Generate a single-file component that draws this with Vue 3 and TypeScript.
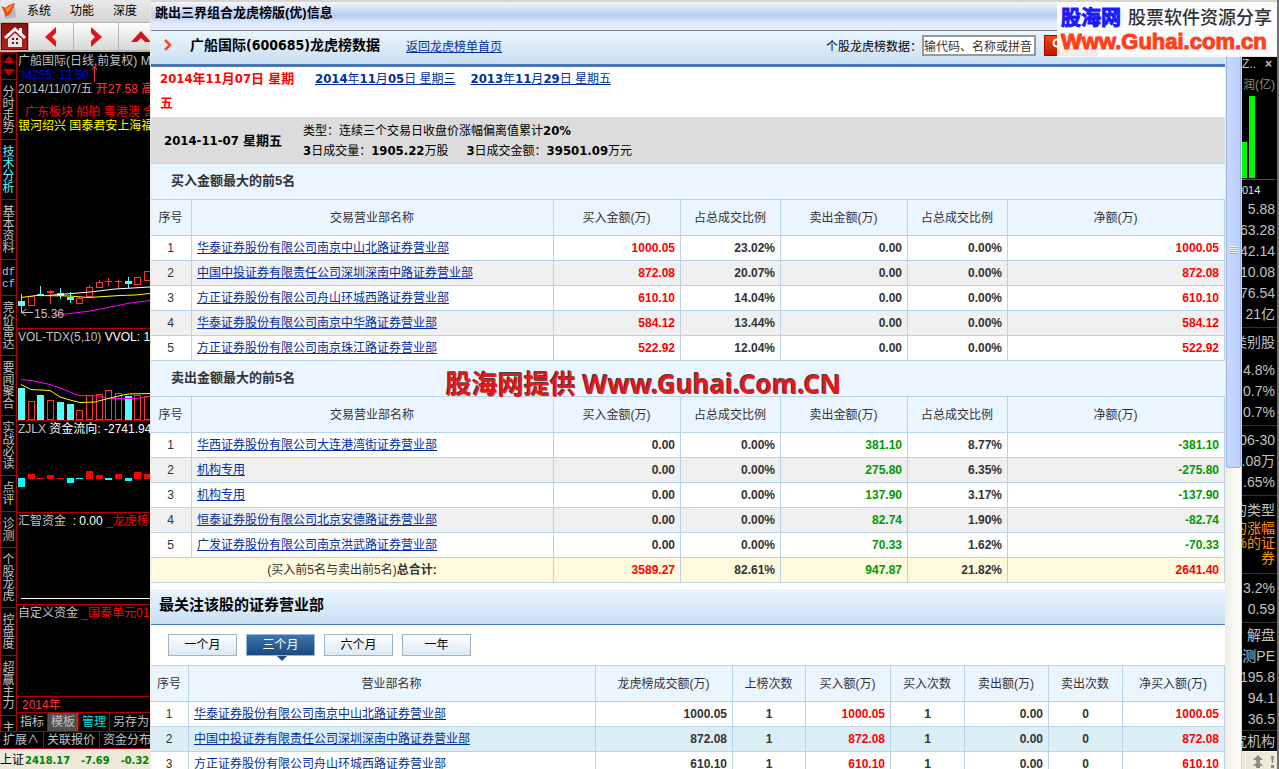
<script setup lang="ts">
import { ref } from 'vue'

interface Row { no: number; name: string; buy: string; buyPct: string; sell: string; sellPct: string; net: string }
interface Rank { no: number; name: string; total: string; times: string; buy: string; buyTimes: string; sell: string; sellTimes: string; net: string }
interface Bar { x: number; y: number; h: number; kind: 'up' | 'down' }
interface Candle { x: number; top: number; bottom: number; high: number; low: number; kind: 'up' | 'down' | 'flat' }

const buyers: Row[] = [
  { no: 1, name: '华泰证券股份有限公司南京中山北路证券营业部', buy: '1000.05', buyPct: '23.02%', sell: '0.00', sellPct: '0.00%', net: '1000.05' },
  { no: 2, name: '中国中投证券有限责任公司深圳深南中路证券营业部', buy: '872.08', buyPct: '20.07%', sell: '0.00', sellPct: '0.00%', net: '872.08' },
  { no: 3, name: '方正证券股份有限公司舟山环城西路证券营业部', buy: '610.10', buyPct: '14.04%', sell: '0.00', sellPct: '0.00%', net: '610.10' },
  { no: 4, name: '华泰证券股份有限公司南京中华路证券营业部', buy: '584.12', buyPct: '13.44%', sell: '0.00', sellPct: '0.00%', net: '584.12' },
  { no: 5, name: '方正证券股份有限公司南京珠江路证券营业部', buy: '522.92', buyPct: '12.04%', sell: '0.00', sellPct: '0.00%', net: '522.92' },
]
const sellers: Row[] = [
  { no: 1, name: '华西证券股份有限公司大连港湾街证券营业部', buy: '0.00', buyPct: '0.00%', sell: '381.10', sellPct: '8.77%', net: '-381.10' },
  { no: 2, name: '机构专用', buy: '0.00', buyPct: '0.00%', sell: '275.80', sellPct: '6.35%', net: '-275.80' },
  { no: 3, name: '机构专用', buy: '0.00', buyPct: '0.00%', sell: '137.90', sellPct: '3.17%', net: '-137.90' },
  { no: 4, name: '恒泰证券股份有限公司北京安德路证券营业部', buy: '0.00', buyPct: '0.00%', sell: '82.74', sellPct: '1.90%', net: '-82.74' },
  { no: 5, name: '广发证券股份有限公司南京洪武路证券营业部', buy: '0.00', buyPct: '0.00%', sell: '70.33', sellPct: '1.62%', net: '-70.33' },
]
const boards = [
  { title: '买入金额最大的前5名', rows: buyers, total: false },
  { title: '卖出金额最大的前5名', rows: sellers, total: true },
]
const ranks: Rank[] = [
  { no: 1, name: '华泰证券股份有限公司南京中山北路证券营业部', total: '1000.05', times: '1', buy: '1000.05', buyTimes: '1', sell: '0.00', sellTimes: '0', net: '1000.05' },
  { no: 2, name: '中国中投证券有限责任公司深圳深南中路证券营业部', total: '872.08', times: '1', buy: '872.08', buyTimes: '1', sell: '0.00', sellTimes: '0', net: '872.08' },
  { no: 3, name: '方正证券股份有限公司舟山环城西路证券营业部', total: '610.10', times: '1', buy: '610.10', buyTimes: '1', sell: '0.00', sellTimes: '0', net: '610.10' },
]
const periods = ['一个月', '三个月', '六个月', '一年']
const period = ref('三个月')
const keyword = ref('输代码、名称或拼音')

const tone = (v: string): string => (v.startsWith('-') ? 'green' : v === '0.00' ? '' : 'red')

const sideTabs = ['分时走势', '技术分析', '基本资料', 'df|cf', '竞价雷达', '要闻聚合', '实战必读', '点评', '诊测', '个股龙虎', '控盘度', '超赢主力', '主']
const tabLines = (t: string): string[] => (t.includes('|') ? t.split('|') : [...t])

const candles: Candle[] = [
  { x: 21, top: 301, bottom: 306, high: 294, low: 313, kind: 'down' },
  { x: 31, top: 296, bottom: 306, high: 296, low: 296, kind: 'up' },
  { x: 40, top: 294, bottom: 296, high: 286, low: 296, kind: 'down' },
  { x: 50, top: 291, bottom: 293, high: 290, low: 304, kind: 'flat' },
  { x: 60, top: 293, bottom: 296, high: 288, low: 299, kind: 'down' },
  { x: 70, top: 297, bottom: 300, high: 292, low: 303, kind: 'down' },
  { x: 79, top: 298, bottom: 304, high: 296, low: 298, kind: 'up' },
  { x: 89, top: 287, bottom: 297, high: 285, low: 287, kind: 'up' },
  { x: 99, top: 282, bottom: 288, high: 280, low: 289, kind: 'up' },
  { x: 108, top: 281, bottom: 282, high: 278, low: 286, kind: 'flat' },
  { x: 118, top: 281, bottom: 282, high: 280, low: 288, kind: 'flat' },
  { x: 128, top: 281, bottom: 284, high: 277, low: 288, kind: 'down' },
  { x: 137, top: 277, bottom: 285, high: 277, low: 277, kind: 'up' },
  { x: 147, top: 271, bottom: 281, high: 271, low: 282, kind: 'up' },
]
const slots = [18, 28, 37, 47, 57, 67, 76, 86, 96, 105, 115, 125, 134, 144]
const volTops = [388, 401, 395, 400, 402, 404, 410, 395, 394, 390, 393, 396, 395, 396]
const volDown = [0, 2, 4, 5, 11]
const volumes: Bar[] = slots.map((x, i) => ({ x, y: volTops[i], h: 420 - volTops[i], kind: volDown.includes(i) ? 'down' : 'up' }))
const flowRaw = [-9, 5, 1, 4, 1, -5, -1, 8, 4, -2, 5, -3, 7, 5]
const flows: Bar[] = slots.map((x, i) => ({
  x,
  y: flowRaw[i] < 0 ? 478 : 479 - flowRaw[i],
  h: Math.abs(flowRaw[i]),
  kind: flowRaw[i] < 0 ? 'down' : 'up',
}))

const prices = ['5.88', '63.28', '42.14', '10.08', '76.54', '21亿']
const shares = ['4.8%', '0.7%', '0.7%']
const report = ['06-30', '.08万', '.65%']
const forecast = ['解盘', '测PE', '195.8', '94.1', '36.5']
</script>

<template>
  <div class="shell">
    <aside class="terminal">
      <nav class="menu">
        <svg class="logo" width="18" height="18" viewBox="0 0 18 18">
          <path d="M2 5h12l1 10-11 2z" fill="#b4b8be" />
          <path d="M0 4l5 2c2-3 5-4 9-5-1 4-2 5-3 6 0 4-3 6-7 8 1-4-2-7-4-11z" fill="#f0480a" />
          <path d="M4 7c3-1 5-3 8-5-1 4-4 5-5 9-1-1-2-3-3-4z" fill="#ff9030" />
        </svg>
        <a href="#">系统</a><a href="#">功能</a><a href="#">深度</a>
      </nav>
      <div class="tools">
        <button class="home" aria-label="首页">
          <svg width="24" height="24" viewBox="0 0 24 24">
            <path d="M12 2L1 12l2 2 9-8 9 8 2-2-4-4V3h-3v3z" fill="#fff" />
            <path d="M5 14l7-6 7 6v8H5z" fill="#e9e4e4" />
            <path d="M9 13h2v2H9zM13 13h2v2h-2zM9 17h2v2H9zM13 17h2v2h-2z" fill="#6a1010" />
          </svg>
        </button>
        <button aria-label="后退"><svg width="12" height="20" viewBox="0 0 12 20"><path d="M11 0L0 10l11 10v-6L7 10l4-4z" fill="#e0161a" /></svg></button>
        <button aria-label="前进"><svg width="12" height="20" viewBox="0 0 12 20"><path d="M1 0l11 10L1 20v-6l4-4-4-4z" fill="#e0161a" /></svg></button>
        <button aria-label="上移"><svg width="20" height="12" viewBox="0 0 20 12"><path d="M0 11L10 0l10 11h-6l-4-4-4 4z" fill="#d0161a" /></svg></button>
      </div>
      <div class="work">
        <div class="tabs">
          <div class="spin">
            <svg width="12" height="22" viewBox="0 0 12 22"><path d="M6 1l6 7H0zM0 14h12l-6 7z" fill="#c00000" /></svg>
          </div>
          <button v-for="t in sideTabs" :key="t" class="tab" :class="{ on: t === '技术分析', mono: t.includes('|') }">
            <span v-for="(c, i) in tabLines(t)" :key="i">{{ c }}</span>
          </button>
        </div>
        <div class="charts">
          <section class="panel k">
            <p>广船国际(日线,前复权) M</p>
            <p class="blue">M255: 13.50</p>
            <p>2014/11/07/五 <span class="hot">开27.58 高</span></p>
            <p class="plates">广东板块 船舶 粤港澳 含</p>
            <p class="yellow">银河绍兴 国泰君安上海福</p>
            <svg class="plot" viewBox="17 52 133 276" width="133" height="276">
              <path d="M94.5 82V67M92 70l2.500-4 2.500 4" stroke="#ff3232" fill="none" />
              <g v-for="c in candles" :key="c.x" :class="c.kind">
                <line :x1="c.x + 0.5" :x2="c.x + 0.5" :y1="c.high" :y2="c.kind === 'up' ? c.top : c.low" />
                <rect v-if="c.kind === 'up'" :x="c.x - 2.5" :y="c.top + 0.5" width="6" :height="c.bottom - c.top - 1" />
                <rect v-else :x="c.x - 3" :y="c.top" width="7" :height="c.bottom - c.top" class="solid" />
              </g>
              <polyline points="47,295.5 60,294.5 90,292 115,289 150,287" stroke="#fff" fill="none" />
              <polyline points="21,297.5 36,295.5 70,296 88,297.5 120,295.5 135,295 150,293.5" stroke="#ff0" fill="none" />
              <polyline points="53,315.5 70,313.5 90,311 110,307 130,303 150,300.5" stroke="#f0f" fill="none" />
              <path d="M22 312.5h11M26 309l-4 3.500 4 3.500" stroke="#c0c0c0" fill="none" />
              <text x="34" y="318" class="mark">15.36</text>
            </svg>
          </section>
          <section class="panel">
            <p>VOL-TDX(5,10) <b class="w">VVOL: 11</b></p>
            <svg class="plot" viewBox="17 329 133 91" width="133" height="91">
              <g v-for="b in volumes" :key="b.x" :class="b.kind">
                <rect v-if="b.kind === 'up'" :x="b.x + 0.5" :y="b.y + 0.5" width="6" :height="b.h - 1" />
                <rect v-else :x="b.x" :y="b.y" width="7" :height="b.h" class="solid" />
              </g>
              <polyline points="21,379.5 31,380.5 50,384.5 60,388 70,392 79,395.5 99,396 108,398.5 136,398.5 150,396.5" stroke="#f0f" fill="none" />
              <polyline points="21,384.5 31,389.5 50,390.5 60,397 70,400 80,402.5 95,402 110,398 128,394 150,393.5" stroke="#ff0" fill="none" />
            </svg>
          </section>
          <section class="panel">
            <p>ZJLX <b class="w">资金流向: -2741.94</b></p>
            <svg class="plot" viewBox="17 421 133 91" width="133" height="91">
              <rect v-for="b in flows" :key="b.x" :x="b.x" :y="b.y" width="7" :height="b.h" :fill="b.kind === 'up' ? '#f00' : '#0ff'" />
            </svg>
          </section>
          <section class="panel">
            <p>汇智资金 <b class="w">&nbsp;: 0.00</b> <span class="r">_龙虎榜</span></p>
            <svg class="plot" viewBox="17 513 133 91" width="133" height="91"><path d="M21 598.5h129" stroke="#fff" /></svg>
          </section>
          <section class="panel">
            <p>自定义资金 <span class="r">_国泰单元01</span></p>
          </section>
          <div class="year">2014年</div>
          <div class="ops"><button>指标</button><button class="sel">模板</button><button class="cy">管理</button><button>另存为</button></div>
        </div>
      </div>
      <div class="ops bottom"><button>扩展∧</button><button>关联报价</button><button>资金分布</button></div>
      <div class="status">上证<b>2418.17</b><b>-7.69</b><b>-0.32</b></div>
    </aside>

    <main class="dialog">
      <div class="titlebar">跳出三界组合龙虎榜版(优)信息</div>
      <div class="view">
        <div class="page">
          <header class="head">
            <svg width="8" height="12" viewBox="0 0 8 12"><path d="M1 1l5 5-5 5" stroke="#f84b10" stroke-width="2.500" fill="none" /></svg>
            <h1>广船国际(600685)龙虎榜数据</h1>
            <a href="#">返回龙虎榜单首页</a>
            <form class="search" @submit.prevent>
              <label for="kw">个股龙虎榜数据：</label>
              <input id="kw" v-model="keyword" type="text" />
              <button class="go">
                <svg width="12" height="14" viewBox="0 0 12 14"><circle cx="5" cy="5" r="3.500" stroke="#fff" stroke-width="2" fill="none" /><path d="M7 8l4 5" stroke="#fff" stroke-width="2" /></svg>
                查询
              </button>
              <button class="latest" type="button">查看最新</button>
            </form>
          </header>
          <div class="dates">
            <strong>2014年11月07日 星期五</strong>
            <a href="#"><b>2014</b>年<b>11</b>月<b>05</b>日 星期三</a>
            <a href="#"><b>2013</b>年<b>11</b>月<b>29</b>日 星期五</a>
          </div>
          <div class="info">
            <strong>2014-11-07 星期五</strong>
            <div>
              <p>类型：连续三个交易日收盘价涨幅偏离值累计<b>20%</b></p>
              <p><span><b>3</b>日成交量：<b>1905.22</b>万股</span><span><b>3</b>日成交金额：<b>39501.09</b>万元</span></p>
            </div>
          </div>
          <section v-for="bd in boards" :key="bd.title" class="board">
            <h2>{{ bd.title }}</h2>
            <div v-if="bd.total" class="stamp">股海网提供 Www.Guhai.Com.CN</div>
            <table>
              <colgroup><col class="c40" /><col /><col class="c127" /><col class="c100" /><col class="c127" /><col class="c100" /><col class="c217" /></colgroup>
              <thead>
                <tr><th>序号</th><th>交易营业部名称</th><th>买入金额(万)</th><th>占总成交比例</th><th>卖出金额(万)</th><th>占总成交比例</th><th>净额(万)</th></tr>
              </thead>
              <tbody>
                <tr v-for="r in bd.rows" :key="r.no">
                  <td class="no">{{ r.no }}</td>
                  <td class="name"><a href="#">{{ r.name }}</a></td>
                  <td :class="tone(r.buy)">{{ r.buy }}</td>
                  <td>{{ r.buyPct }}</td>
                  <td :class="r.sell === '0.00' ? '' : 'green'">{{ r.sell }}</td>
                  <td>{{ r.sellPct }}</td>
                  <td :class="tone(r.net)">{{ r.net }}</td>
                </tr>
                <tr v-if="bd.total" class="sum">
                  <td colspan="2" class="sumname">(买入前5名与卖出前5名)<b>总合计:</b></td>
                  <td class="red">3589.27</td><td>82.61%</td><td class="green">947.87</td><td>21.82%</td><td class="red">2641.40</td>
                </tr>
              </tbody>
            </table>
          </section>
          <h2 class="focus">最关注该股的证券营业部</h2>
          <div class="periods">
            <button v-for="p in periods" :key="p" :class="{ on: p === period }" @click="period = p">{{ p }}</button>
          </div>
          <table class="ranks">
            <colgroup><col class="c37" /><col /><col class="c137" /><col class="c73" /><col class="c85" /><col class="c74" /><col class="c84" /><col class="c74" /><col class="c102" /></colgroup>
            <thead>
              <tr><th>序号</th><th>营业部名称</th><th>龙虎榜成交额(万)</th><th>上榜次数</th><th>买入额(万)</th><th>买入次数</th><th>卖出额(万)</th><th>卖出次数</th><th>净买入额(万)</th></tr>
            </thead>
            <tbody>
              <tr v-for="r in ranks" :key="r.no">
                <td class="no">{{ r.no }}</td>
                <td class="name"><a href="#">{{ r.name }}</a></td>
                <td>{{ r.total }}</td>
                <td class="mid">{{ r.times }}</td>
                <td class="red">{{ r.buy }}</td>
                <td class="mid">{{ r.buyTimes }}</td>
                <td>{{ r.sell }}</td>
                <td class="mid">{{ r.sellTimes }}</td>
                <td class="red">{{ r.net }}</td>
              </tr>
            </tbody>
          </table>
        </div>
        <div class="track"><div class="thumb"><i></i><i></i><i></i><i></i></div></div>
      </div>
    </main>

    <aside class="quotes">
      <div class="qtop"></div>
      <div class="qhead">Z.. <b>×</b></div>
      <div class="qunit">润(亿)</div>
      <svg class="qbars" width="35" height="86" viewBox="0 0 35 86"><path d="M0 47h5v36H0zM7 1h6v82H7z" fill="#00f800" /><path d="M0 84.500h33" stroke="#555" /></svg>
      <div class="qyear">014</div>
      <div class="group"><div v-for="v in prices" :key="v">{{ v }}</div></div>
      <div class="group"><div class="kind">类别股</div><div v-for="(v, i) in shares" :key="i">{{ v }}</div></div>
      <div class="group"><div v-for="v in report" :key="v">{{ v }}</div></div>
      <div class="group reason"><div>的类型</div><em>的涨幅</em><em>%的证</em><em>券</em></div>
      <div class="group"><div>3.2%</div><div>0.59</div></div>
      <div class="group outlook"><div v-for="v in forecast" :key="v">{{ v }}</div></div>
      <div class="group last"><div>究机构</div></div>
      <div class="qfoot">
        <svg width="26" height="14" viewBox="0 0 26 14"><path d="M7 0l5 5H9v2H5V5H2zM7 6l5 5H9v2H5v-2H2zM20 1h3l-1 7h-1zM20 10h3v3h-3z" fill="#8c8a80" /></svg>
      </div>
    </aside>

    <div class="brand">
      <div class="line"><b>股海网</b><span>股票软件资源分享</span></div>
      <div class="url">Www.Guhai.com.cn</div>
    </div>
  </div>
</template>

<style>
body { margin: 0; overflow: hidden; }
</style>

<style scoped>
* { box-sizing: border-box; }
p, h1, h2 { margin: 0; }
button { padding: 0; margin: 0; font: inherit; }
.shell {
  position: relative;
  display: grid;
  grid-template-columns: 150px minmax(0, 1fr) 37px;
  height: 100vh;
  overflow: hidden;
  font-family: "Liberation Sans", "Noto Sans CJK SC", sans-serif;
  font-size: 12px;
  color: #333;
}
a { color: #00309c; }
.red { color: #f00; }
.green { color: #090; }

/* trading terminal on the left */
.terminal { display: flex; flex-direction: column; overflow: hidden; background: #000; color: #c0c0c0; white-space: nowrap; }
.menu { display: flex; align-items: center; flex: none; height: 22px; padding-left: 1px; background: linear-gradient(#e9e9e9, #d4d4d4); }
.menu .logo { flex: none; margin-right: 8px; }
.menu a { width: 43px; color: #000; text-decoration: none; flex: none; line-height: 20px; }
.tools { display: flex; flex: none; height: 30px; padding: 1px; background: #b8b4ac; gap: 1px; }
.tools button { display: flex; align-items: center; justify-content: center; flex: none; width: 44px; height: 27px; border: 0; background: linear-gradient(#fff, #d6d6d6); }
.tools .home { width: 27px; border: 1px solid #5c0808; background: linear-gradient(#8d1010, #b02020); }
.work { display: flex; flex: 1; min-height: 0; }
.tabs { flex: none; width: 17px; overflow: hidden; border-left: 1px solid #b00000; border-right: 1px solid #b00000; }
.spin { display: flex; align-items: center; justify-content: center; height: 27px; border-top: 1px solid #b00000; }
.tab { display: flex; flex-direction: column; align-items: center; width: 100%; padding: 6px 0 5px; border: 0; border-top: 1px solid #b00000; background: #000; color: #c0c0c0; line-height: 12px; }
.tab.on { color: #54fcfc; }
.tab.mono { font-family: "Liberation Mono", monospace; font-size: 11px; }
.charts { display: flex; flex-direction: column; flex: 1; min-width: 0; }
.panel { position: relative; height: 92px; overflow: hidden; border-bottom: 1px solid #b00000; }
.panel.k { flex: 1; }
.panel p { padding-left: 1px; line-height: 16px; }
.panel.k p { padding-left: 1px; line-height: 14px; }
.panel.k p:first-child { padding-top: 2px; }
.panel.k p.blue { padding-left: 5px; color: #0000e0; }
.panel.k p.plates { padding: 9px 0 0 8px; color: #f00; }
.panel.k p.yellow { color: #ff0; }
.panel .w { font-weight: 400; color: #fff; }
.panel .r { color: #f00; }
.hot { color: #ff3232; }
.plot { position: absolute; left: 0; top: 0; }
.plot .up, .plot .flat { stroke: #ff3232; fill: none; }
.plot .down { stroke: #54fcfc; }
.plot .down .solid { fill: #54fcfc; stroke: none; }
.plot .flat .solid { fill: #ff3232; stroke: none; }
.mark { font-size: 12px; fill: #c0c0c0; }
.year { height: 15px; padding-left: 5px; line-height: 16px; color: #ff3232; }
.ops { display: flex; flex: none; height: 19px; border-top: 1px solid #b00000; overflow: hidden; }
.ops button { flex: none; padding: 0 3px; border: 0; border-right: 1px solid #b00000; background: #000; color: #c0c0c0; line-height: 17px; }
.ops .sel { background: #505050; }
.ops .cy { color: #00e0e0; }
.ops.bottom { height: 18px; border-bottom: 1px solid #b00000; }
.ops.bottom button { padding: 0 4px 0 3px; line-height: 15px; }
.status { flex: none; height: 20px; border-top: 1px solid #fff; background: #ece9d8; color: #000; line-height: 20px; overflow: hidden; }
.status b { margin: 0 10px 0 1px; color: #008000; font: bold 11px/20px "DejaVu Sans Condensed", "DejaVu Sans", sans-serif; }

/* dialog */
.dialog { display: flex; flex-direction: column; min-width: 0; border-left: 1px solid #ece9d8; background: #fff; overflow: hidden; }
.titlebar {
  flex: none; height: 31px; padding-left: 4px; line-height: 22px;
  border-top: 2px solid #d8d5cf; border-bottom: 1px solid #80808c;
  background: linear-gradient(#f4f8ff, #b8cbf2 48%, #dfe9ff 75%, #e6efff);
  color: #000; font-size: 13px; font-weight: 700;
}
.view { display: flex; flex: 1; min-height: 0; }
.page { flex: 1; min-width: 0; overflow: hidden; }
.head { display: flex; align-items: center; height: 36px; padding: 0 6px 5px 13px; border-bottom: 3px solid #4a76b8; background: linear-gradient(#eaf5ff, #c9dff1); color: #000; white-space: nowrap; }
.head h1 { margin: 0 26px 0 18px; font: bold 14px/24px "DejaVu Sans Condensed", "Noto Sans CJK SC", sans-serif; }
.search { display: flex; align-items: center; margin-left: auto; }
.search input { width: 114px; height: 21px; padding: 0; border: 2px solid #999; background: #fff; color: #333; font: inherit; }
.go { display: flex; align-items: center; gap: 4px; width: 54px; height: 21px; margin: 0 42px 0 8px; padding-left: 7px; border: 1px solid #b00000; background: linear-gradient(#f04a10, #c01800); color: #fff; }
.latest { width: 79px; height: 21px; border: 1px solid #9ab; background: #eef; color: #333; }
.dates { display: flex; align-items: flex-start; height: 50px; padding-left: 9px; line-height: 24px; }
.dates strong { width: 136px; margin-right: 19px; color: #f00; font: bold 13px/24px "DejaVu Sans Condensed", "Noto Sans CJK SC", sans-serif; }
.dates a { margin-right: 15px; }
.dates b { font: bold 13px/16px "DejaVu Sans Condensed", sans-serif; }
.info { display: flex; align-items: center; height: 47px; padding: 2px 0 0 13px; border-bottom: 1px solid #b8d2e8; background: #dcdcdc; color: #000; }
.info strong { width: 139px; font: bold 13px/20px "DejaVu Sans Condensed", "Noto Sans CJK SC", sans-serif; }
.info p { line-height: 20px; }
.info b { font: bold 13px/16px "DejaVu Sans Condensed", sans-serif; }
.info p span { margin-right: 18px; }
.board { position: relative; }
.board h2 { height: 35px; padding-left: 20px; line-height: 34px; background: #eaf5ff; font-size: 13px; font-weight: 700; }
.stamp {
  position: absolute; left: 295px; top: 5px; white-space: nowrap;
  color: #e81818; font: bold 26px/36px "Noto Sans", "Noto Sans CJK SC", sans-serif;
  text-shadow: -1px -1px 0 #444;
}
table { width: 100%; table-layout: fixed; border-spacing: 0; border-top: 1px solid #b8d2e8; }
.c37 { width: 38px; } .c40 { width: 41px; } .c73 { width: 73px; } .c74 { width: 74px; } .c84 { width: 84px; } .c85 { width: 85px; }
.c100 { width: 100px; } .c102 { width: 102px; } .c127 { width: 127px; } .c137 { width: 137px; } .c217 { width: 217px; }
th, td { padding: 0; border-right: 1px solid #b8d2e8; border-bottom: 1px solid #b8d2e8; white-space: nowrap; overflow: hidden; }
th { height: 36px; padding-right: 1px; background: #eaf5ff; font-weight: 400; line-height: 20px; }
td { height: 25px; padding-right: 5px; text-align: right; font-weight: 700; line-height: 24px; }
td.no { padding: 0 1px 0 0; text-align: center; font-weight: 400; }
td.name { padding-left: 5px; text-align: left; font-weight: 400; line-height: 22px; }
td.mid { padding: 0; text-align: center; }
tbody tr:nth-child(even) { background: #f0f0f0; }
.ranks tbody tr:nth-child(even) { background: #dceef5; }
tbody tr.sum { background: #fffade; }
td.sumname { text-align: center; font-weight: 400; padding: 0; }
.focus { height: 36px; margin-top: 6px; padding-left: 8px; border-bottom: 1px solid #4a76b8; background: linear-gradient(#eaf5ff, #c9dff1); color: #000; font-size: 15px; line-height: 32px; }
.periods { display: flex; gap: 9px; height: 40px; padding: 9px 0 0 17px; }
.periods button { position: relative; width: 69px; height: 22px; border: 1px solid #9ab4cc; background: linear-gradient(#fff, #dbe8f2); color: #000; line-height: 18px; }
.periods .on { background: linear-gradient(#3a76b4, #1c4a7c); color: #fff; }
.periods .on::after { content: ""; position: absolute; left: 30px; top: 21px; border: 5px solid transparent; border-top-color: #1c4a7c; border-bottom: 0; }
.track { flex: none; width: 17px; border-left: 1px solid #e8eef8; border-right: 1px solid #d8d4c8; background: linear-gradient(90deg, #f0efe8, #fdfdfa); }
.thumb { display: flex; flex-direction: column; align-items: center; justify-content: center; gap: 1px; height: 437px; border: 1px solid #9ab0e0; border-radius: 2px; background: linear-gradient(90deg, #c8d8ff, #bccffa); }
.thumb i { width: 7px; height: 1px; background: #f4f8ff; box-shadow: 0 1px #8fabe8; }

/* quote column on the right */
.quotes { display: flex; flex-direction: column; overflow: hidden; border-right: 2px solid #707070; background: #000; color: #c0c0c0; font-size: 14px; white-space: nowrap; }
.quotes > div { flex: none; }
.qtop { height: 56px; background: #d8d5cf; }
.qhead { display: flex; justify-content: space-between; padding-right: 5px; height: 17px; font-size: 12px; line-height: 16px; }
.qunit { display: flex; justify-content: flex-end; height: 22px; padding-right: 2px; font-size: 12px; line-height: 24px; color: #909090; }
.qbars { flex: none; }
.qyear { height: 18px; font-size: 11px; line-height: 18px; color: #e0e0e0; }
.group { padding: 0 2px 2px 0; border-bottom: 1px solid #333; }
.group > div, .group > em { display: flex; justify-content: flex-end; line-height: 21px; font-style: normal; }
.group + .group { padding-top: 4px; }
.group > .kind { padding-bottom: 7px; }
.group.reason { padding-bottom: 7px; }
.group.reason em { color: #ff9000; line-height: 15px; }
.group.outlook { padding-top: 2px; padding-bottom: 0; }
.group.last { height: 20px; padding: 0 2px 0 0; border: 0; }
.qfoot { display: flex; align-items: center; justify-content: flex-end; height: 20px; margin-top: auto; border-top: 1px solid #fff; background: #ece9d8; }

.brand { position: absolute; right: 2px; top: 2px; width: 220px; height: 55px; padding: 3px 0 0 4px; background: rgba(255, 255, 255, .9); white-space: nowrap; }
.brand .line { display: flex; align-items: center; gap: 7px; height: 26px; }
.brand .line b { color: #1a1aff; font-size: 20px; line-height: 26px; -webkit-text-stroke: 1px #1a1aff; }
.brand .line span { color: #333; font-size: 18px; font-weight: 500; line-height: 24px; }
.brand .url { color: #ff4018; font-size: 22px; font-weight: 700; line-height: 22px; -webkit-text-stroke: 1px #ff4018; }
</style>
